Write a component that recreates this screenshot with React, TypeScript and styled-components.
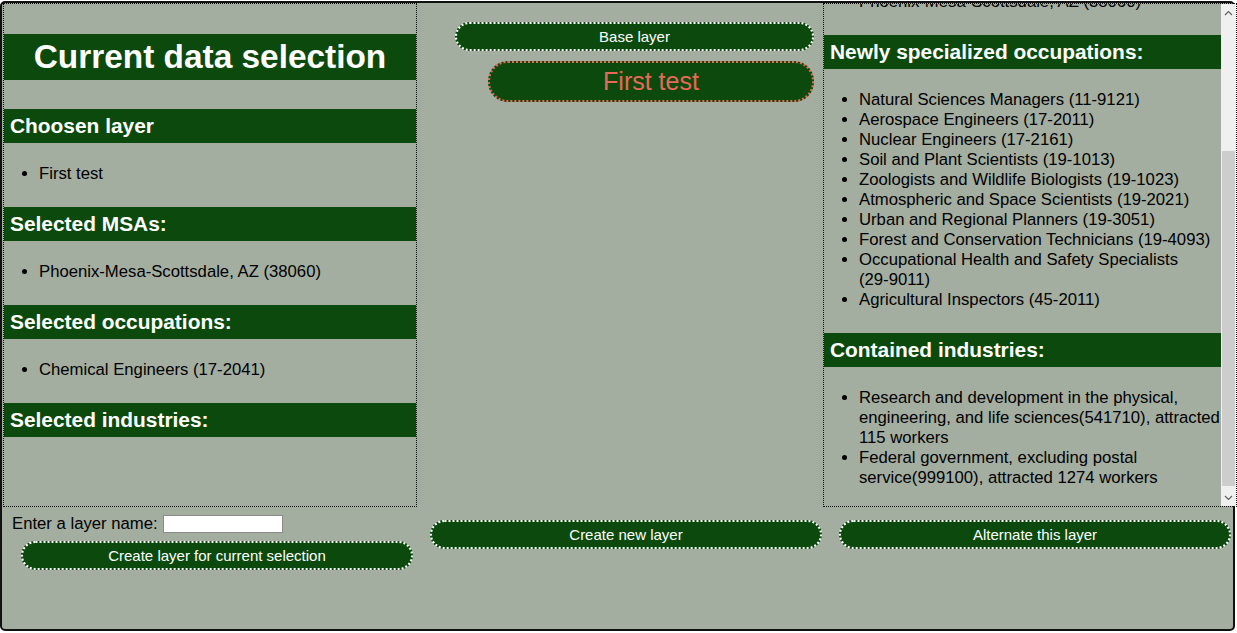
import React, { useEffect, useRef, useState } from 'react';
import styled, { createGlobalStyle } from 'styled-components';

const green = '#0b4a0c';
const sage = '#a3ada0';
const salmon = '#e8685a';

const GlobalStyle = createGlobalStyle`
  html, body {
    margin: 0;
    padding: 0;
    background: #ffffff;
  }
  body {
    font-family: "Liberation Sans", Arial, sans-serif;
    color: #000;
  }
`;

const Frame = styled.div`
  box-sizing: border-box;
  width: 1235px;
  height: 630px;
  margin-top: 1px;
  padding: 0 1px;
  border: 2px solid #111;
  border-radius: 5px;
  background: ${sage};
  display: grid;
  grid-template-columns: 414px 406px 414px;
  grid-template-rows: 504px auto;
`;

const Panel = styled.div`
  box-sizing: border-box;
  height: 504px;
  border: 1px dotted #111;
  overflow: hidden;
  display: flex;
`;

const ScrollArea = styled.div`
  flex: 1;
  min-width: 0;
  overflow: hidden;
`;

const Scrollbar = styled.div`
  width: 15px;
  flex: none;
  display: flex;
  flex-direction: column;
  background: #f0f0f0;
`;

const ArrowButton = styled.div`
  height: 17px;
  flex: none;
  display: flex;
  align-items: center;
  justify-content: center;
`;

const Track = styled.div`
  flex: 1;
  position: relative;
`;

const Thumb = styled.div`
  position: absolute;
  left: 1px;
  right: 1px;
  background: #cdcdcd;
`;

const Title = styled.h1`
  margin: 30px 0 29px;
  height: 46px;
  line-height: 46px;
  background: ${green};
  color: #fff;
  font-size: 33.4px;
  font-weight: bold;
  text-align: center;
`;

const Band = styled.h2<{ $first?: boolean }>`
  margin: ${(p) => (p.$first ? '30px' : '0')} 0 0;
  height: 34px;
  line-height: 34px;
  padding-left: 6px;
  background: ${green};
  color: #fff;
  font-size: 20.9px;
  font-weight: bold;
`;

const List = styled.ul`
  margin: 0;
  padding: 21px 0 23px 35px;
  font-size: 16.7px;
  line-height: 20px;
  min-height: 20px;
`;

const Code = styled.span`
  white-space: nowrap;
`;

const Middle = styled.div`
  padding: 19px 9px 0 38px;
`;

const Children = styled.div`
  padding-left: 33px;
  margin-top: 10px;
`;

const LayerButton = styled.button<{ $current?: boolean }>`
  display: block;
  width: 100%;
  box-sizing: border-box;
  height: ${(p) => (p.$current ? '41px' : '29px')};
  border: 2px dotted ${(p) => (p.$current ? salmon : '#fff')};
  border-radius: ${(p) => (p.$current ? '20px' : '15px')};
  background: ${green};
  color: ${(p) => (p.$current ? salmon : '#fff')};
  font-family: "Liberation Sans", Arial, sans-serif;
  font-size: ${(p) => (p.$current ? '25px' : '15px')};
  padding: 0;
  cursor: pointer;
`;

const Footer = styled.div<{ $top: number; $left: number }>`
  padding-top: ${(p) => p.$top}px;
  padding-left: ${(p) => p.$left}px;
`;

const NameRow = styled.label`
  display: flex;
  align-items: center;
  gap: 5px;
  font-size: 16.7px;
  margin-bottom: 7px;
`;

const NameInput = styled.input`
  box-sizing: border-box;
  width: 120px;
  height: 18px;
  border: 1px solid #8a8a8a;
  background: #fff;
  padding: 0 2px;
`;

const ActionButton = styled(LayerButton)`
  width: 392px;
`;

const Indented = styled.div`
  padding-left: 9px;
`;

const newlySpecialized = [
  ['Natural Sciences Managers', '11-9121'],
  ['Aerospace Engineers', '17-2011'],
  ['Nuclear Engineers', '17-2161'],
  ['Soil and Plant Scientists', '19-1013'],
  ['Zoologists and Wildlife Biologists', '19-1023'],
  ['Atmospheric and Space Scientists', '19-2021'],
  ['Urban and Regional Planners', '19-3051'],
  ['Forest and Conservation Technicians', '19-4093'],
  ['Occupational Health and Safety Specialists', '29-9011'],
  ['Agricultural Inspectors', '45-2011'],
];

const industries = [
  'Research and development in the physical, engineering, and life sciences(541710), attracted 115 workers',
  'Federal government, excluding postal service(999100), attracted 1274 workers',
];

function Chevron({ up }: { up?: boolean }) {
  return (
    <svg width="9" height="6" viewBox="0 0 9 6">
      <polyline
        points={up ? '1,5 4.5,1.5 8,5' : '1,1 4.5,4.5 8,1'}
        fill="none"
        stroke="#606060"
        strokeWidth="1.2"
      />
    </svg>
  );
}

function LayerDetails() {
  const ref = useRef<HTMLDivElement>(null);
  const [thumb, setThumb] = useState({ top: 0, height: 0 });

  useEffect(() => {
    const el = ref.current;
    if (!el) return;
    el.scrollTop = el.scrollHeight - el.clientHeight - 5;
    const track = el.clientHeight - 34;
    setThumb({
      top: (track * el.scrollTop) / el.scrollHeight,
      height: (track * el.clientHeight) / el.scrollHeight,
    });
  }, []);

  return (
    <Panel>
      <ScrollArea ref={ref}>
        <Band $first>Layer:</Band>
        <List>
          <li>First test</li>
        </List>
        <Band>Selected MSAs:</Band>
        <List>
          <li>Phoenix-Mesa-Scottsdale, AZ (38060)</li>
        </List>
        <Band>Newly specialized occupations:</Band>
        <List>
          {newlySpecialized.map(([name, code]) => (
            <li key={code}>
              {name} <Code>({code})</Code>
            </li>
          ))}
        </List>
        <Band>Contained industries:</Band>
        <List>
          {industries.map((i) => (
            <li key={i}>{i}</li>
          ))}
        </List>
      </ScrollArea>
      <Scrollbar>
        <ArrowButton>
          <Chevron up />
        </ArrowButton>
        <Track>
          <Thumb style={{ top: thumb.top, height: thumb.height }} />
        </Track>
        <ArrowButton>
          <Chevron />
        </ArrowButton>
      </Scrollbar>
    </Panel>
  );
}

export default function App() {
  return (
    <>
      <GlobalStyle />
      <Frame>
        <Panel>
          <ScrollArea>
            <Title>Current data selection</Title>
            <Band>Choosen layer</Band>
            <List>
              <li>First test</li>
            </List>
            <Band>Selected MSAs:</Band>
            <List>
              <li>Phoenix-Mesa-Scottsdale, AZ (38060)</li>
            </List>
            <Band>Selected occupations:</Band>
            <List>
              <li>Chemical Engineers (17-2041)</li>
            </List>
            <Band>Selected industries:</Band>
          </ScrollArea>
        </Panel>

        <Middle>
          <LayerButton>Base layer</LayerButton>
          <Children>
            <LayerButton $current>First test</LayerButton>
          </Children>
        </Middle>

        <LayerDetails />

        <Footer $top={7} $left={9}>
          <NameRow>
            Enter a layer name:
            <NameInput type="text" />
          </NameRow>
          <Indented>
            <ActionButton>Create layer for current selection</ActionButton>
          </Indented>
        </Footer>

        <Footer $top={13} $left={13}>
          <ActionButton>Create new layer</ActionButton>
        </Footer>

        <Footer $top={13} $left={16}>
          <ActionButton>Alternate this layer</ActionButton>
        </Footer>
      </Frame>
    </>
  );
}
